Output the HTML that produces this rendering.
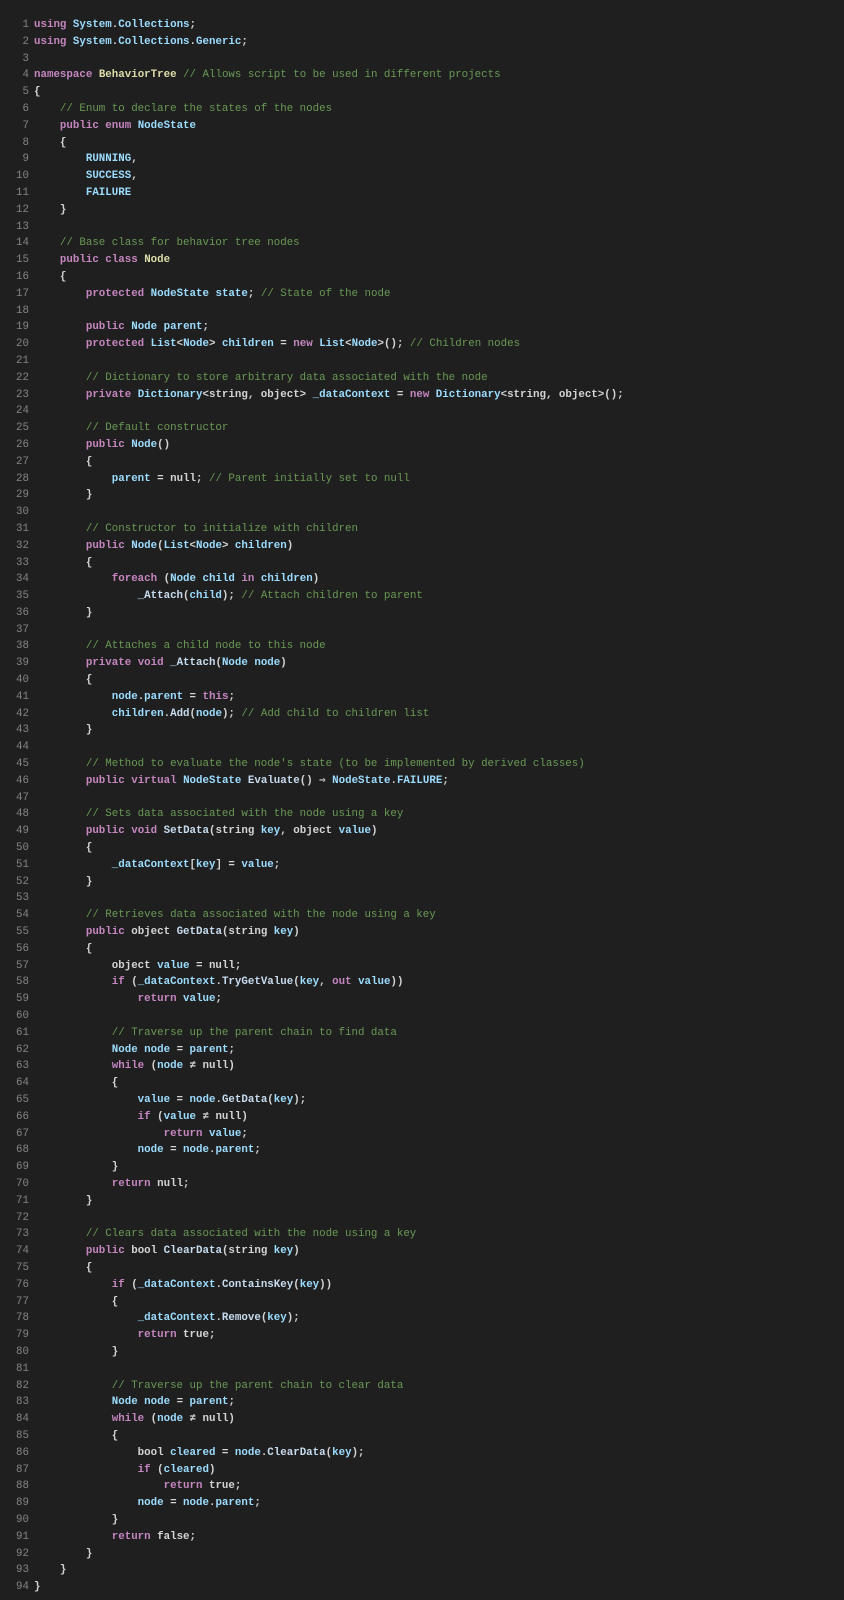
<!DOCTYPE html>
<html><head><meta charset="utf-8"><style>
html,body{margin:0;padding:0;background:#1f1f1f;width:844px;height:1600px;overflow:hidden}
.w{position:absolute;left:0;top:17px;font-family:"Liberation Mono","DejaVu Sans Mono",monospace;font-size:10.8px;line-height:16.79px;color:#d4d4d4;white-space:pre;font-weight:bold}
.n{position:absolute;left:0;width:29px;text-align:right;color:#858585;font-weight:normal}
.code{position:absolute;left:34px}
.k{color:#c586c0}.i{color:#9cdcfe}.f{color:#dcdcaa}.c{color:#6a9955;font-weight:normal}.m{color:#c8dcef}
</style></head><body>
<div class="w"><div class="n">1
2
3
4
5
6
7
8
9
10
11
12
13
14
15
16
17
18
19
20
21
22
23
24
25
26
27
28
29
30
31
32
33
34
35
36
37
38
39
40
41
42
43
44
45
46
47
48
49
50
51
52
53
54
55
56
57
58
59
60
61
62
63
64
65
66
67
68
69
70
71
72
73
74
75
76
77
78
79
80
81
82
83
84
85
86
87
88
89
90
91
92
93
94</div><div class="code"><span class="k">using</span> <span class="i">System</span>.<span class="i">Collections</span>;
<span class="k">using</span> <span class="i">System</span>.<span class="i">Collections</span>.<span class="i">Generic</span>;

<span class="k">namespace</span> <span class="f">BehaviorTree</span> <span class="c">// Allows script to be used in different projects</span>
{
    <span class="c">// Enum to declare the states of the nodes</span>
    <span class="k">public</span> <span class="k">enum</span> <span class="i">NodeState</span>
    {
        <span class="i">RUNNING</span>,
        <span class="i">SUCCESS</span>,
        <span class="i">FAILURE</span>
    }

    <span class="c">// Base class for behavior tree nodes</span>
    <span class="k">public</span> <span class="k">class</span> <span class="f">Node</span>
    {
        <span class="k">protected</span> <span class="i">NodeState</span> <span class="i">state</span>; <span class="c">// State of the node</span>

        <span class="k">public</span> <span class="i">Node</span> <span class="i">parent</span>;
        <span class="k">protected</span> <span class="i">List</span>&lt;<span class="i">Node</span>&gt; <span class="i">children</span> = <span class="k">new</span> <span class="i">List</span>&lt;<span class="i">Node</span>&gt;(); <span class="c">// Children nodes</span>

        <span class="c">// Dictionary to store arbitrary data associated with the node</span>
        <span class="k">private</span> <span class="i">Dictionary</span>&lt;string, object&gt; <span class="i">_dataContext</span> = <span class="k">new</span> <span class="i">Dictionary</span>&lt;string, object&gt;();

        <span class="c">// Default constructor</span>
        <span class="k">public</span> <span class="i">Node</span>()
        {
            <span class="i">parent</span> = null; <span class="c">// Parent initially set to null</span>
        }

        <span class="c">// Constructor to initialize with children</span>
        <span class="k">public</span> <span class="i">Node</span>(<span class="i">List</span>&lt;<span class="i">Node</span>&gt; <span class="i">children</span>)
        {
            <span class="k">foreach</span> (<span class="i">Node</span> <span class="i">child</span> <span class="k">in</span> <span class="i">children</span>)
                <span class="m">_Attach</span>(<span class="i">child</span>); <span class="c">// Attach children to parent</span>
        }

        <span class="c">// Attaches a child node to this node</span>
        <span class="k">private</span> <span class="k">void</span> <span class="m">_Attach</span>(<span class="i">Node</span> <span class="i">node</span>)
        {
            <span class="i">node</span>.<span class="i">parent</span> = <span class="k">this</span>;
            <span class="i">children</span>.<span class="m">Add</span>(<span class="i">node</span>); <span class="c">// Add child to children list</span>
        }

        <span class="c">// Method to evaluate the node's state (to be implemented by derived classes)</span>
        <span class="k">public</span> <span class="k">virtual</span> <span class="i">NodeState</span> <span class="m">Evaluate</span>() ⇒ <span class="i">NodeState</span>.<span class="i">FAILURE</span>;

        <span class="c">// Sets data associated with the node using a key</span>
        <span class="k">public</span> <span class="k">void</span> <span class="m">SetData</span>(string <span class="i">key</span>, object <span class="i">value</span>)
        {
            <span class="i">_dataContext</span>[<span class="i">key</span>] = <span class="i">value</span>;
        }

        <span class="c">// Retrieves data associated with the node using a key</span>
        <span class="k">public</span> object <span class="m">GetData</span>(string <span class="i">key</span>)
        {
            object <span class="i">value</span> = null;
            <span class="k">if</span> (<span class="i">_dataContext</span>.<span class="m">TryGetValue</span>(<span class="i">key</span>, <span class="k">out</span> <span class="i">value</span>))
                <span class="k">return</span> <span class="i">value</span>;

            <span class="c">// Traverse up the parent chain to find data</span>
            <span class="i">Node</span> <span class="i">node</span> = <span class="i">parent</span>;
            <span class="k">while</span> (<span class="i">node</span> ≠ null)
            {
                <span class="i">value</span> = <span class="i">node</span>.<span class="m">GetData</span>(<span class="i">key</span>);
                <span class="k">if</span> (<span class="i">value</span> ≠ null)
                    <span class="k">return</span> <span class="i">value</span>;
                <span class="i">node</span> = <span class="i">node</span>.<span class="i">parent</span>;
            }
            <span class="k">return</span> null;
        }

        <span class="c">// Clears data associated with the node using a key</span>
        <span class="k">public</span> bool <span class="m">ClearData</span>(string <span class="i">key</span>)
        {
            <span class="k">if</span> (<span class="i">_dataContext</span>.<span class="m">ContainsKey</span>(<span class="i">key</span>))
            {
                <span class="i">_dataContext</span>.<span class="m">Remove</span>(<span class="i">key</span>);
                <span class="k">return</span> true;
            }

            <span class="c">// Traverse up the parent chain to clear data</span>
            <span class="i">Node</span> <span class="i">node</span> = <span class="i">parent</span>;
            <span class="k">while</span> (<span class="i">node</span> ≠ null)
            {
                bool <span class="i">cleared</span> = <span class="i">node</span>.<span class="m">ClearData</span>(<span class="i">key</span>);
                <span class="k">if</span> (<span class="i">cleared</span>)
                    <span class="k">return</span> true;
                <span class="i">node</span> = <span class="i">node</span>.<span class="i">parent</span>;
            }
            <span class="k">return</span> false;
        }
    }
}</div></div>
</body></html>
